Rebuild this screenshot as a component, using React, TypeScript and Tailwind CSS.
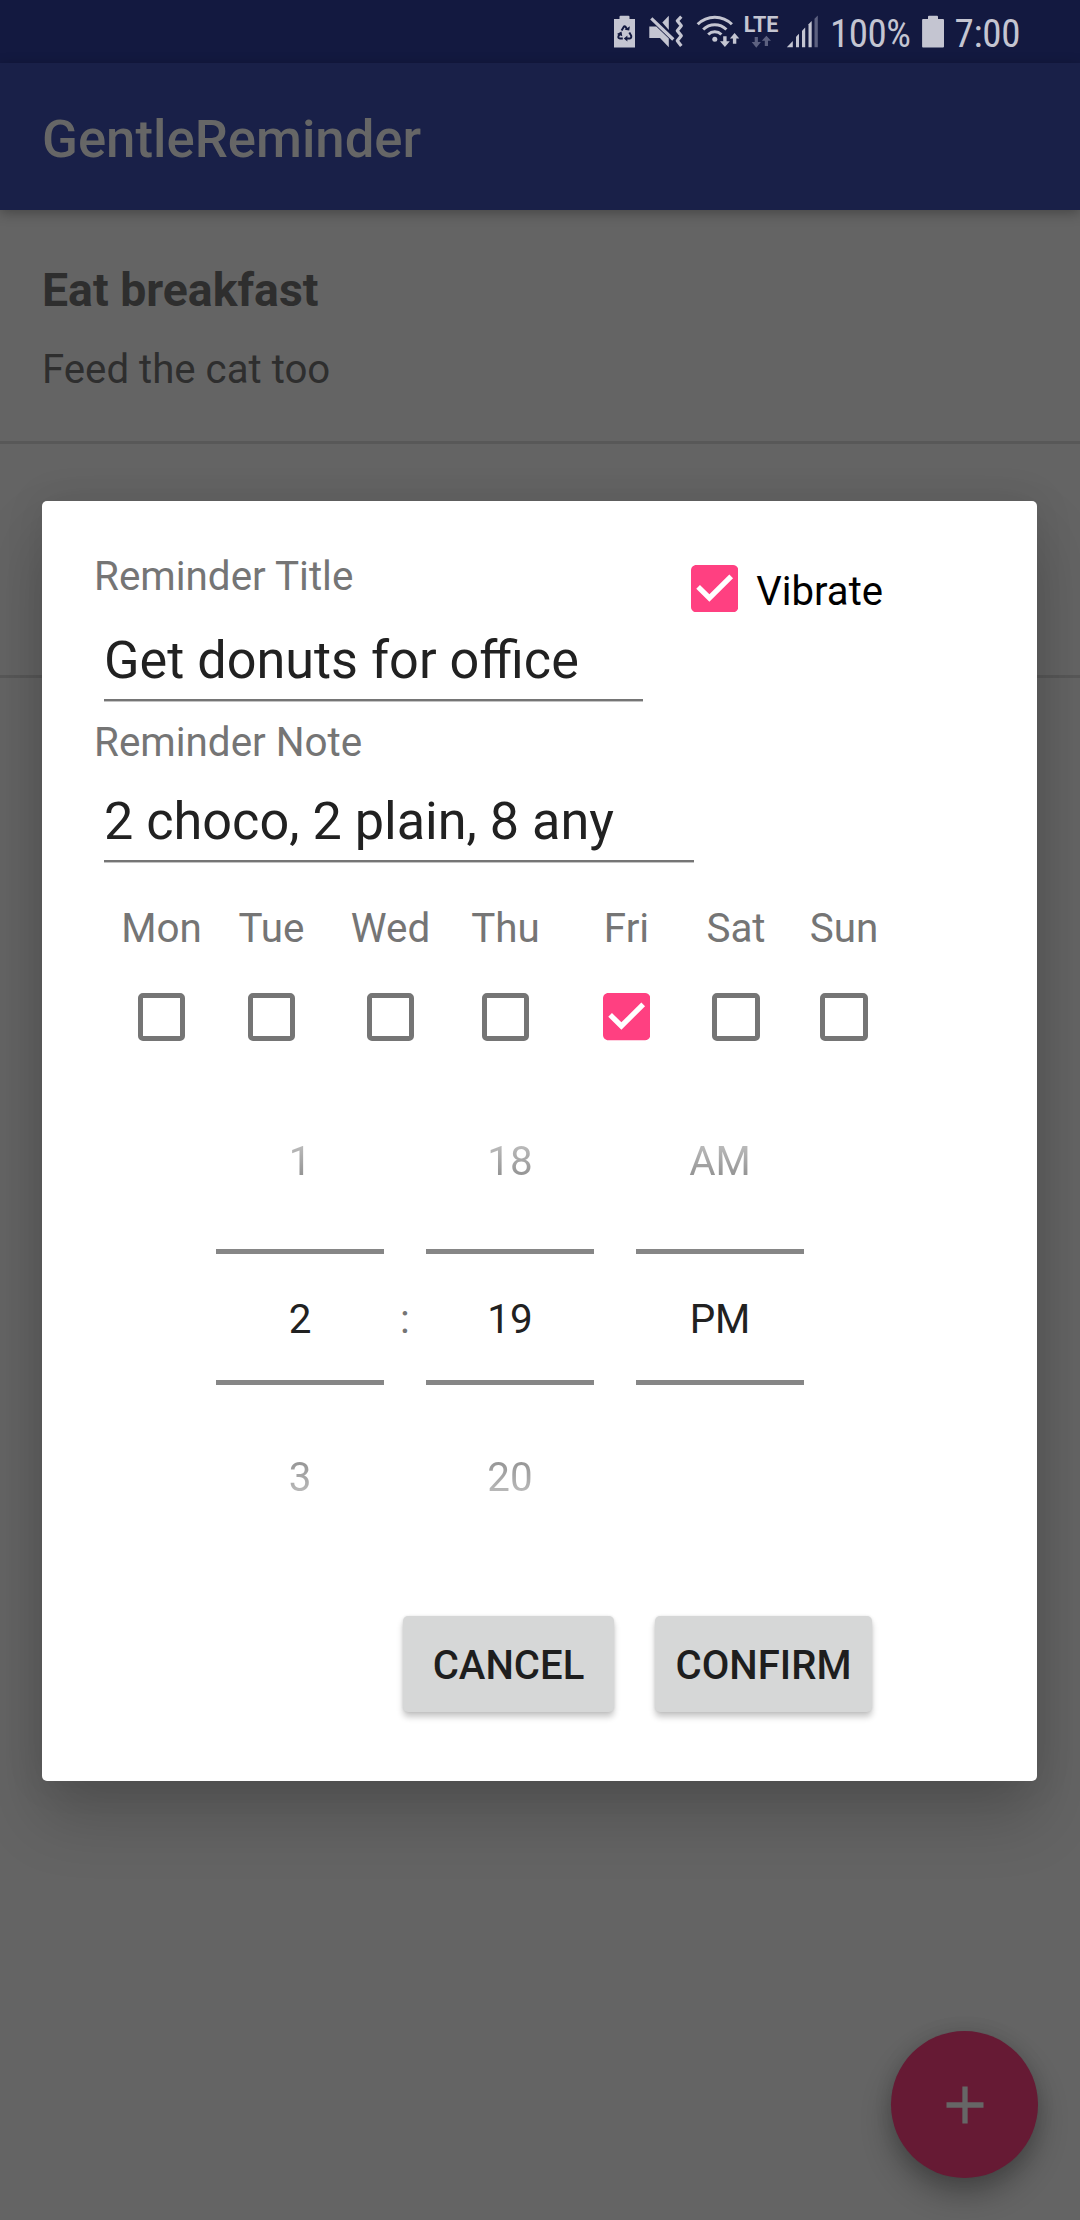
import React from "react";

const ICON = "#c4c5d1";
const DIM = "#5d6180";

function BatteryRecycle() {
  return (
    <svg className="ml-[613px] mt-[15px] h-[34px] w-[23px] shrink-0" viewBox="613 15 23 34">
      <path d="M614 19h5.500v-2.200q0-1 1-1h8q1 0 1 1V19h5.500v28.500h-21z" fill={ICON} />
      <g fill="none" stroke="#131940" strokeWidth="2">
        <path d="M621.600 30.500l2.200-3.800q.8-1 1.600 0l1.600 2.600" />
        <path d="M629.300 32.400l1.800 3.200q.7 2.600-1.400 2.900h-3.300" />
        <path d="M622.800 38.500h-2.700q-2.500-.3-1.500-2.600l1.300-2.300" />
      </g>
      <g fill="#131940">
        <path d="M624.600 29.700l4.600.9.700-4.300z" />
        <path d="M627.400 35.400v6.200l-3.600-3.100z" />
        <path d="M616.900 34.100l4.600-2.500.8 4.700z" />
      </g>
    </svg>
  );
}

function MutedVibrate() {
  return (
    <svg className="ml-[12px] mt-[15px] h-[34px] w-[36px] shrink-0" viewBox="648 15 36 34">
      <path d="M649.300 26.500h7l12.500 12V47.200l-8.800-9.200h-10.700z" fill={ICON} />
      <path d="M662.300 22.500l6.500-6.700v14.300z" fill={ICON} />
      <path d="M651.300 18.300l22 21.200" stroke={ICON} strokeWidth="3.200" fill="none" />
      <path
        d="M681.300 16.600l-4 4.200 4 5-4 5 4 5-4 5 4 5.200"
        stroke={ICON}
        strokeWidth="3.200"
        strokeLinejoin="round"
        fill="none"
      />
    </svg>
  );
}

function WifiData() {
  return (
    <svg className="ml-[12px] mt-[15px] h-[34px] w-[44px] shrink-0" viewBox="696 15 44 34">
      <g fill="none" stroke={ICON} strokeWidth="3">
        <path d="M697.700 24.300a24 24 0 0 1 34.200 0" />
        <path d="M703.200 29.500a16.500 16.500 0 0 1 23.200 0" />
        <path d="M708.200 34.500a9.500 9.500 0 0 1 13.200 0" />
      </g>
      <circle cx="714.800" cy="39.200" r="2.500" fill={ICON} />
      <path d="M723.200 36.200h3.400v5h3.200l-4.900 5.800-4.900-5.800h3.200z" fill={ICON} />
      <path d="M732.900 43.800h3.400v-5.200h3l-4.700-5.600-4.700 5.600h3z" fill={ICON} />
    </svg>
  );
}

function LteData() {
  return (
    <div className="ml-[3px] mt-[15px] flex w-[36px] shrink-0 flex-col items-center">
      <span className="block h-[19px] text-[21.500px] leading-[20px] font-bold text-[#c4c5d1]">LTE</span>
      <svg className="mt-[1px] h-[14px] w-[20px]" viewBox="750 35 20 14">
        <path d="M753.700 37h3.200v5h3l-4.600 5.800-4.600-5.800h3z" fill={DIM} />
        <path d="M763.800 46v-5.200h-3l4.600-5 4.600 5h-3V46z" fill={DIM} />
      </svg>
    </div>
  );
}

function Signal() {
  return (
    <svg className="ml-[7px] mt-[15px] h-[34px] w-[34px] shrink-0" viewBox="785 15 34 34">
      <path d="M785.800 47.300l6-6.200v6.200z" fill={ICON} />
      <path d="M795 47.300V36.800l3-3.100v13.600z" fill={ICON} />
      <path d="M801 47.300V30.800l3.200-3.200v19.700z" fill={ICON} />
      <path d="M807.500 47.300V24.200l3.200-3.200v26.300z" fill={ICON} />
      <path d="M813.500 47.300V18.800l3.300-3.200v31.700z" fill={DIM} />
    </svg>
  );
}

function StatusBar() {
  return (
    <div className="flex h-[63px] items-start bg-[#131940]">
      <BatteryRecycle />
      <MutedVibrate />
      <WifiData />
      <LteData />
      <Signal />
      <span className="mt-[10px] ml-[10px] w-[84px] shrink-0 text-[39px] leading-[48px] tracking-[-0.500px] whitespace-nowrap text-[#c4c5d1] [font-stretch:75%]">
        100%
      </span>
      <svg className="mt-[15px] ml-[7px] h-[34px] w-[23px] shrink-0" viewBox="0 0 23 34">
        <path d="M2 4h5V1.800q0-1 1-1h8q1 0 1 1V4h5q1 0 1 1v26.500q0 1-1 1H2q-.9 0-.9-1V5Q1.100 4 2 4z" fill={ICON} />
      </svg>
      <span className="mt-[10px] ml-[10.500px] text-[39px] leading-[48px] tracking-[-0.300px] whitespace-nowrap text-[#c4c5d1] [font-stretch:75%]">
        7:00
      </span>
    </div>
  );
}

function CheckBox({ checked }: { checked?: boolean }) {
  if (!checked) {
    return <span className="block h-[47.300px] w-[47.300px] shrink-0 rounded-[5px] border-[5.300px] border-[#757575]" />;
  }
  return (
    <svg className="block h-[47.300px] w-[47.300px] shrink-0" viewBox="3 3 18 18">
      <path
        fill="#ff4081"
        d="M19 3H5c-1.110 0-2 .9-2 2v14c0 1.100.89 2 2 2h14c1.110 0 2-.9 2-2V5c0-1.100-.89-2-2-2z"
      />
      <path fill="#fff" d="M10 17l-5-5 1.410-1.410L10 14.170l7.590-7.590L19 8l-9 9z" />
    </svg>
  );
}

const days = [
  { label: "Mon", width: "w-[110px]" },
  { label: "Tue", width: "w-[110px]" },
  { label: "Wed", width: "w-[128px]" },
  { label: "Thu", width: "w-[102px]" },
  { label: "Fri", width: "w-[140px]", on: true },
  { label: "Sat", width: "w-[79px]" },
  { label: "Sun", width: "w-[137px]" },
];

const fadeUp = "bg-linear-to-b from-[#c6c6c6] to-[#888888] bg-clip-text text-transparent";
const fadeDown = "bg-linear-to-b from-[#8c8c8c] to-[#c4c4c4] bg-clip-text text-transparent";

function Picker({ prev, value, next }: { prev: string; value: string; next?: string }) {
  return (
    <div className="flex w-[168px] flex-col text-center text-[40.400px] leading-[50px] text-[#212121]">
      <span className={`h-[48px] ${fadeUp}`}>{prev}</span>
      <span className="mt-[64px] h-[5px] bg-[#868686]" />
      <span className="mt-[41px] h-[48px]">{value}</span>
      <span className="mt-[37px] h-[5px] bg-[#868686]" />
      <span className={`mt-[68px] h-[48px] ${fadeDown}`}>{next}</span>
    </div>
  );
}

const label = "h-[48px] text-[40.400px] leading-[50px] text-[#757575]";
const field =
  "ml-[10px] border-b-[2px] border-[#757575] pb-[7.500px] text-[52.200px] leading-[62px] text-[#212121] shadow-[0_1px_0_#c4c4c4]";
const button =
  "h-[96px] rounded-[5px] bg-[#d6d7d7] pt-[4px] text-[40.100px] leading-[48px] font-medium text-[#1e1e1e] shadow-[0_5px_6px_rgba(0,0,0,0.22),0_0_3px_rgba(0,0,0,0.1)]";

function ReminderDialog() {
  return (
    <div className="h-[1280px] w-[995px] rounded-[5px] bg-white pt-[51px] pl-[52px] shadow-[0_36px_64px_rgba(0,0,0,0.19),0_0_40px_rgba(0,0,0,0.09)]">
      <div className="flex items-start">
        <div className="w-[549px]">
          <p className={label}>Reminder Title</p>
          <div className={`mt-[29.500px] ${field}`}>Get donuts for office</div>
        </div>
        <label className="mt-[13px] ml-[47.500px] flex items-start">
          <CheckBox checked />
          <span className="mt-[3px] ml-[18.500px] text-[40.100px] leading-[48px] text-black">Vibrate</span>
        </label>
      </div>
      <p className={`mt-[17px] ${label}`}>Reminder Note</p>
      <div className={`mt-[24.500px] w-[590px] ${field}`}>2 choco, 2 plain, 8 any</div>
      <div className="mt-[42px] ml-[12.500px] flex">
        {days.map((d) => (
          <label key={d.label} className={`flex flex-col items-center gap-[41.400px] ${d.width}`}>
            <span className={label}>{d.label}</span>
            <CheckBox checked={d.on} />
          </label>
        ))}
      </div>
      <div className="mt-[96px] ml-[122px] flex">
        <Picker prev="1" value="2" next="3" />
        <span className="mt-[159px] w-[42px] text-center text-[40.400px] leading-[48px] text-[#757575]">:</span>
        <Picker prev="18" value="19" next="20" />
        <div className="w-[42px]" />
        <Picker prev="AM" value="PM" />
      </div>
      <div className="mt-[115px] ml-[309px] flex">
        <button className={`w-[211px] ${button}`}>CANCEL</button>
        <button className={`ml-[41px] w-[217px] ${button}`}>CONFIRM</button>
      </div>
    </div>
  );
}

export default function App() {
  return (
    <div className="relative h-[2220px] w-[1080px] overflow-hidden bg-[#646464] font-['Roboto',sans-serif]">
      <StatusBar />
      <header className="flex h-[147px] items-center bg-[#192048] pt-[6px] pl-[42px] text-[52.700px] font-medium text-[#666666] shadow-[0_3px_12px_rgba(0,0,0,0.3)]">
        GentleReminder
      </header>
      <ul className="text-[#2e2e2e]">
        <li className="h-[234px] border-b-[3px] border-[#585858] pt-[53px] pl-[42px]">
          <p className="text-[46.400px] leading-[54px] font-bold">Eat breakfast</p>
          <p className="mt-[29px] text-[40.200px] leading-[48px]">Feed the cat too</p>
        </li>
        <li className="h-[234px] border-b-[3px] border-[#585858]" />
      </ul>
      <button className="absolute top-[2031px] left-[891px] flex h-[147px] w-[147px] items-center justify-center rounded-full bg-[#661a34] shadow-[0_16px_30px_rgba(0,0,0,0.3),0_0_18px_rgba(0,0,0,0.1)]">
        <svg className="h-[38px] w-[38px]" viewBox="0 0 38 38">
          <path d="M.5 19h37M19 .5v37" stroke="#666" strokeWidth="5.300" />
        </svg>
      </button>
      <div className="absolute inset-0 flex items-start pt-[501px] pl-[42px]">
        <ReminderDialog />
      </div>
    </div>
  );
}
